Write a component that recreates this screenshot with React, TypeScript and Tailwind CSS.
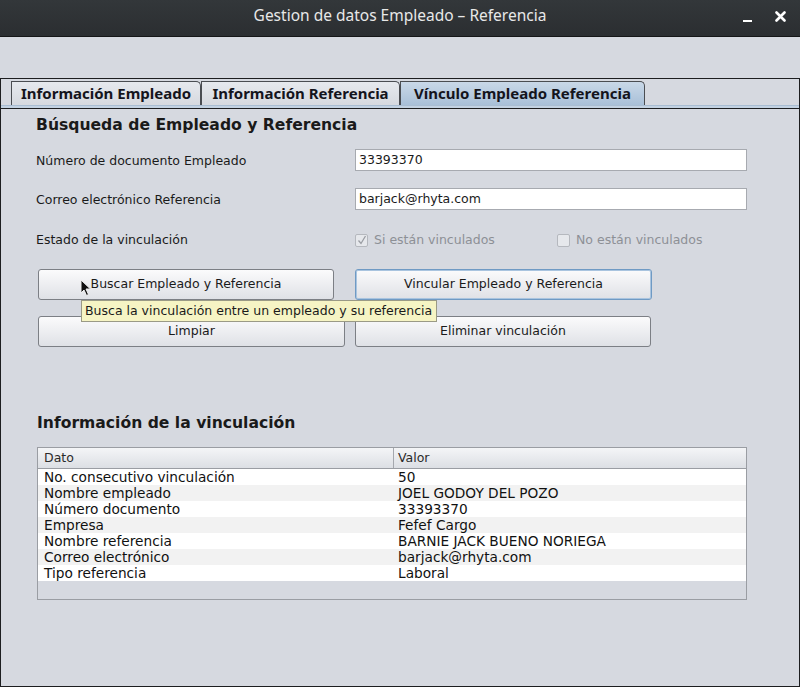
import React from 'react';

const FONT = { fontFamily: '"DejaVu Sans", "Noto Sans", sans-serif' };

const rows = [
  ['No. consecutivo vinculación', '50'],
  ['Nombre empleado', 'JOEL GODOY DEL POZO'],
  ['Número documento', '33393370'],
  ['Empresa', 'Fefef Cargo'],
  ['Nombre referencia', 'BARNIE JACK BUENO NORIEGA'],
  ['Correo electrónico', 'barjack@rhyta.com'],
  ['Tipo referencia', 'Laboral'],
];

const Tab = ({ label, width, selected }: { label: string; width: string; selected?: boolean }) => (
  <div
    className={`${width} h-[24px] flex items-center justify-center whitespace-nowrap border border-b-0 border-[#4a4d52] rounded-tr-[5px] text-[15px] font-bold text-[#14141c] ${
      selected ? 'bg-gradient-to-b from-[#c9d8e8] to-[#a9c0d8]' : 'bg-gradient-to-b from-[#e6e9ee] to-[#d6d9df]'
    }`}
    style={{ fontFamily: '"Noto Sans", sans-serif' }}
  >
    {label}
  </div>
);

const Button = ({ label, width, focused }: { label: string; width: string; focused?: boolean }) => (
  <div
    className={`${width} h-[31px] flex items-center justify-center whitespace-nowrap rounded-[3px] border text-[12.5px] text-[#1a1a1a] bg-gradient-to-b from-[#fbfbfc] to-[#dfe1e6] ${
      focused ? 'border-[#6f9ac4] shadow-[inset_0_0_0_1px_#a9c4df]' : 'border-[#7c7f85]'
    }`}
  >
    {label}
  </div>
);

const Check = ({ checked, label }: { checked?: boolean; label: string }) => (
  <div className="flex items-center gap-[6px] text-[12.5px] text-[#8d9096]">
    <div className="w-[13px] h-[13px] border border-[#b5b8be] bg-[#e6e8ec] rounded-[2px] flex items-center justify-center">
      {checked && (
        <svg width="10" height="10" viewBox="0 0 10 10">
          <path d="M1.5 5.5 L4 8.5 L8.5 1" fill="none" stroke="#9a9da3" strokeWidth="1.3" />
        </svg>
      )}
    </div>
    <span>{label}</span>
  </div>
);

export default function App() {
  return (
    <div className="relative w-[800px] h-[687px] bg-[#d6d9e0] flex flex-col overflow-hidden" style={FONT}>
      {/* title bar */}
      <div className="relative h-[37px] shrink-0 bg-gradient-to-b from-[#33373a] to-[#2b2e31] border-b border-[#151617] flex items-center justify-center">
        <span className="text-[15.5px] text-[#e8e8e8] -mt-[4px]" style={{ fontFamily: '"Noto Sans", sans-serif' }}>
          Gestion de datos Empleado – Referencia
        </span>
        <div className="absolute right-[14px] top-[11px] flex items-center gap-[23px]">
          <div className="w-[9px] h-[2px] bg-white mt-[9px]" />
          <svg width="11" height="11" viewBox="0 0 11 11">
            <path d="M1.5 1.5 L9.5 9.5 M9.5 1.5 L1.5 9.5" stroke="#ffffff" strokeWidth="2.6" strokeLinecap="round" />
          </svg>
        </div>
      </div>

      <div className="h-[41px] shrink-0" />

      {/* frame */}
      <div className="flex-1 border border-[#1d1e20] flex flex-col">
        <div className="h-[27px] pt-[3px] pl-[10px] flex items-end shrink-0 border-b border-[#a9bdd2]">
          <Tab label="Información Empleado" width="w-[190px]" />
          <Tab label="Información Referencia" width="w-[199px]" />
          <Tab label="Vínculo Empleado Referencia" width="w-[245px]" selected />
        </div>
        <div className="h-[2px] bg-[#c3d2e2] shrink-0" />
        <div className="h-px bg-[#1d1e20] shrink-0" />

        <div className="pl-[35px] pt-[1px] text-[12.5px] text-[#1a1a1a] flex flex-col">
          <div className="h-[30px] flex items-center text-[15.6px] font-bold pt-[2px]">Búsqueda de Empleado y Referencia</div>

          <div className="mt-[9px] h-[22px] flex items-center">
            <span className="w-[319px] pt-[2px]">Número de documento Empleado</span>
            <div className="w-[392px] h-[22px] bg-white border border-[#a7aab0] flex items-center px-[3px]">33393370</div>
          </div>

          <div className="mt-[17px] h-[22px] flex items-center">
            <span className="w-[319px] pt-[2px]">Correo electrónico Referencia</span>
            <div className="w-[392px] h-[22px] bg-white border border-[#a7aab0] flex items-center px-[3px]">barjack@rhyta.com</div>
          </div>

          <div className="mt-[20px] h-[20px] flex items-center">
            <span className="w-[319px] pt-[1px]">Estado de la vinculación</span>
            <div className="w-[202px]">
              <Check checked label="Si están vinculados" />
            </div>
            <Check label="No están vinculados" />
          </div>

          <div className="mt-[19px] flex">
            <div className="ml-[2px] w-[317px]">
              <Button label="Buscar Empleado y Referencia" width="w-[296px]" />
            </div>
            <Button label="Vincular Empleado y Referencia" width="w-[297px]" focused />
          </div>

          <div className="mt-[16px] flex">
            <div className="ml-[2px] w-[317px]">
              <Button label="Limpiar" width="w-[307px]" />
            </div>
            <Button label="Eliminar vinculación" width="w-[296px]" />
          </div>

          <div className="mt-[61px] h-[30px] flex items-center text-[15.6px] font-bold ml-[1px] pt-[2px]">Información de la vinculación</div>

          <div className="mt-[9px] ml-[1px] w-[710px] h-[153px] border border-[#9a9da3] bg-[#d6d9e0] flex flex-col">
            <div className="h-[21px] flex bg-gradient-to-b from-[#f4f5f7] to-[#dcdfe4] border-b border-[#9a9da3] text-[12.5px] text-[#2a2a2a]">
              <div className="w-[356px] border-r border-[#a5a8ae] flex items-center pl-[6px]">Dato</div>
              <div className="flex-1 flex items-center pl-[4px]">Valor</div>
            </div>
            {rows.map(([k, v], i) => (
              <div
                key={k}
                className={`h-[16px] flex items-center whitespace-nowrap text-[13.7px] leading-[16px] text-[#111] ${i % 2 === 0 ? 'bg-white' : 'bg-[#f2f2f2]'}`}
              >
                <div className="w-[356px] pl-[6px]">{k}</div>
                <div className="flex-1 pl-[4px]">{v}</div>
              </div>
            ))}
          </div>
        </div>
      </div>

      {/* tooltip */}
      <div className="absolute left-[81px] top-[300px] w-[356px] h-[22px] bg-[#f6f4c4] border border-[#9a9a86] flex items-center pl-[3px] whitespace-nowrap text-[12.5px] text-[#1a1a1a]">
        Busca la vinculación entre un empleado y su referencia
      </div>

      {/* cursor */}
      <svg className="absolute left-[80px] top-[279px]" width="12" height="18" viewBox="0 0 12 18">
        <path d="M1 1 L1 14 L4 11 L6.5 16.5 L8.5 15.5 L6 10 L10.5 10 Z" fill="#111" stroke="#f0f0f0" strokeWidth="1" />
      </svg>
    </div>
  );
}
